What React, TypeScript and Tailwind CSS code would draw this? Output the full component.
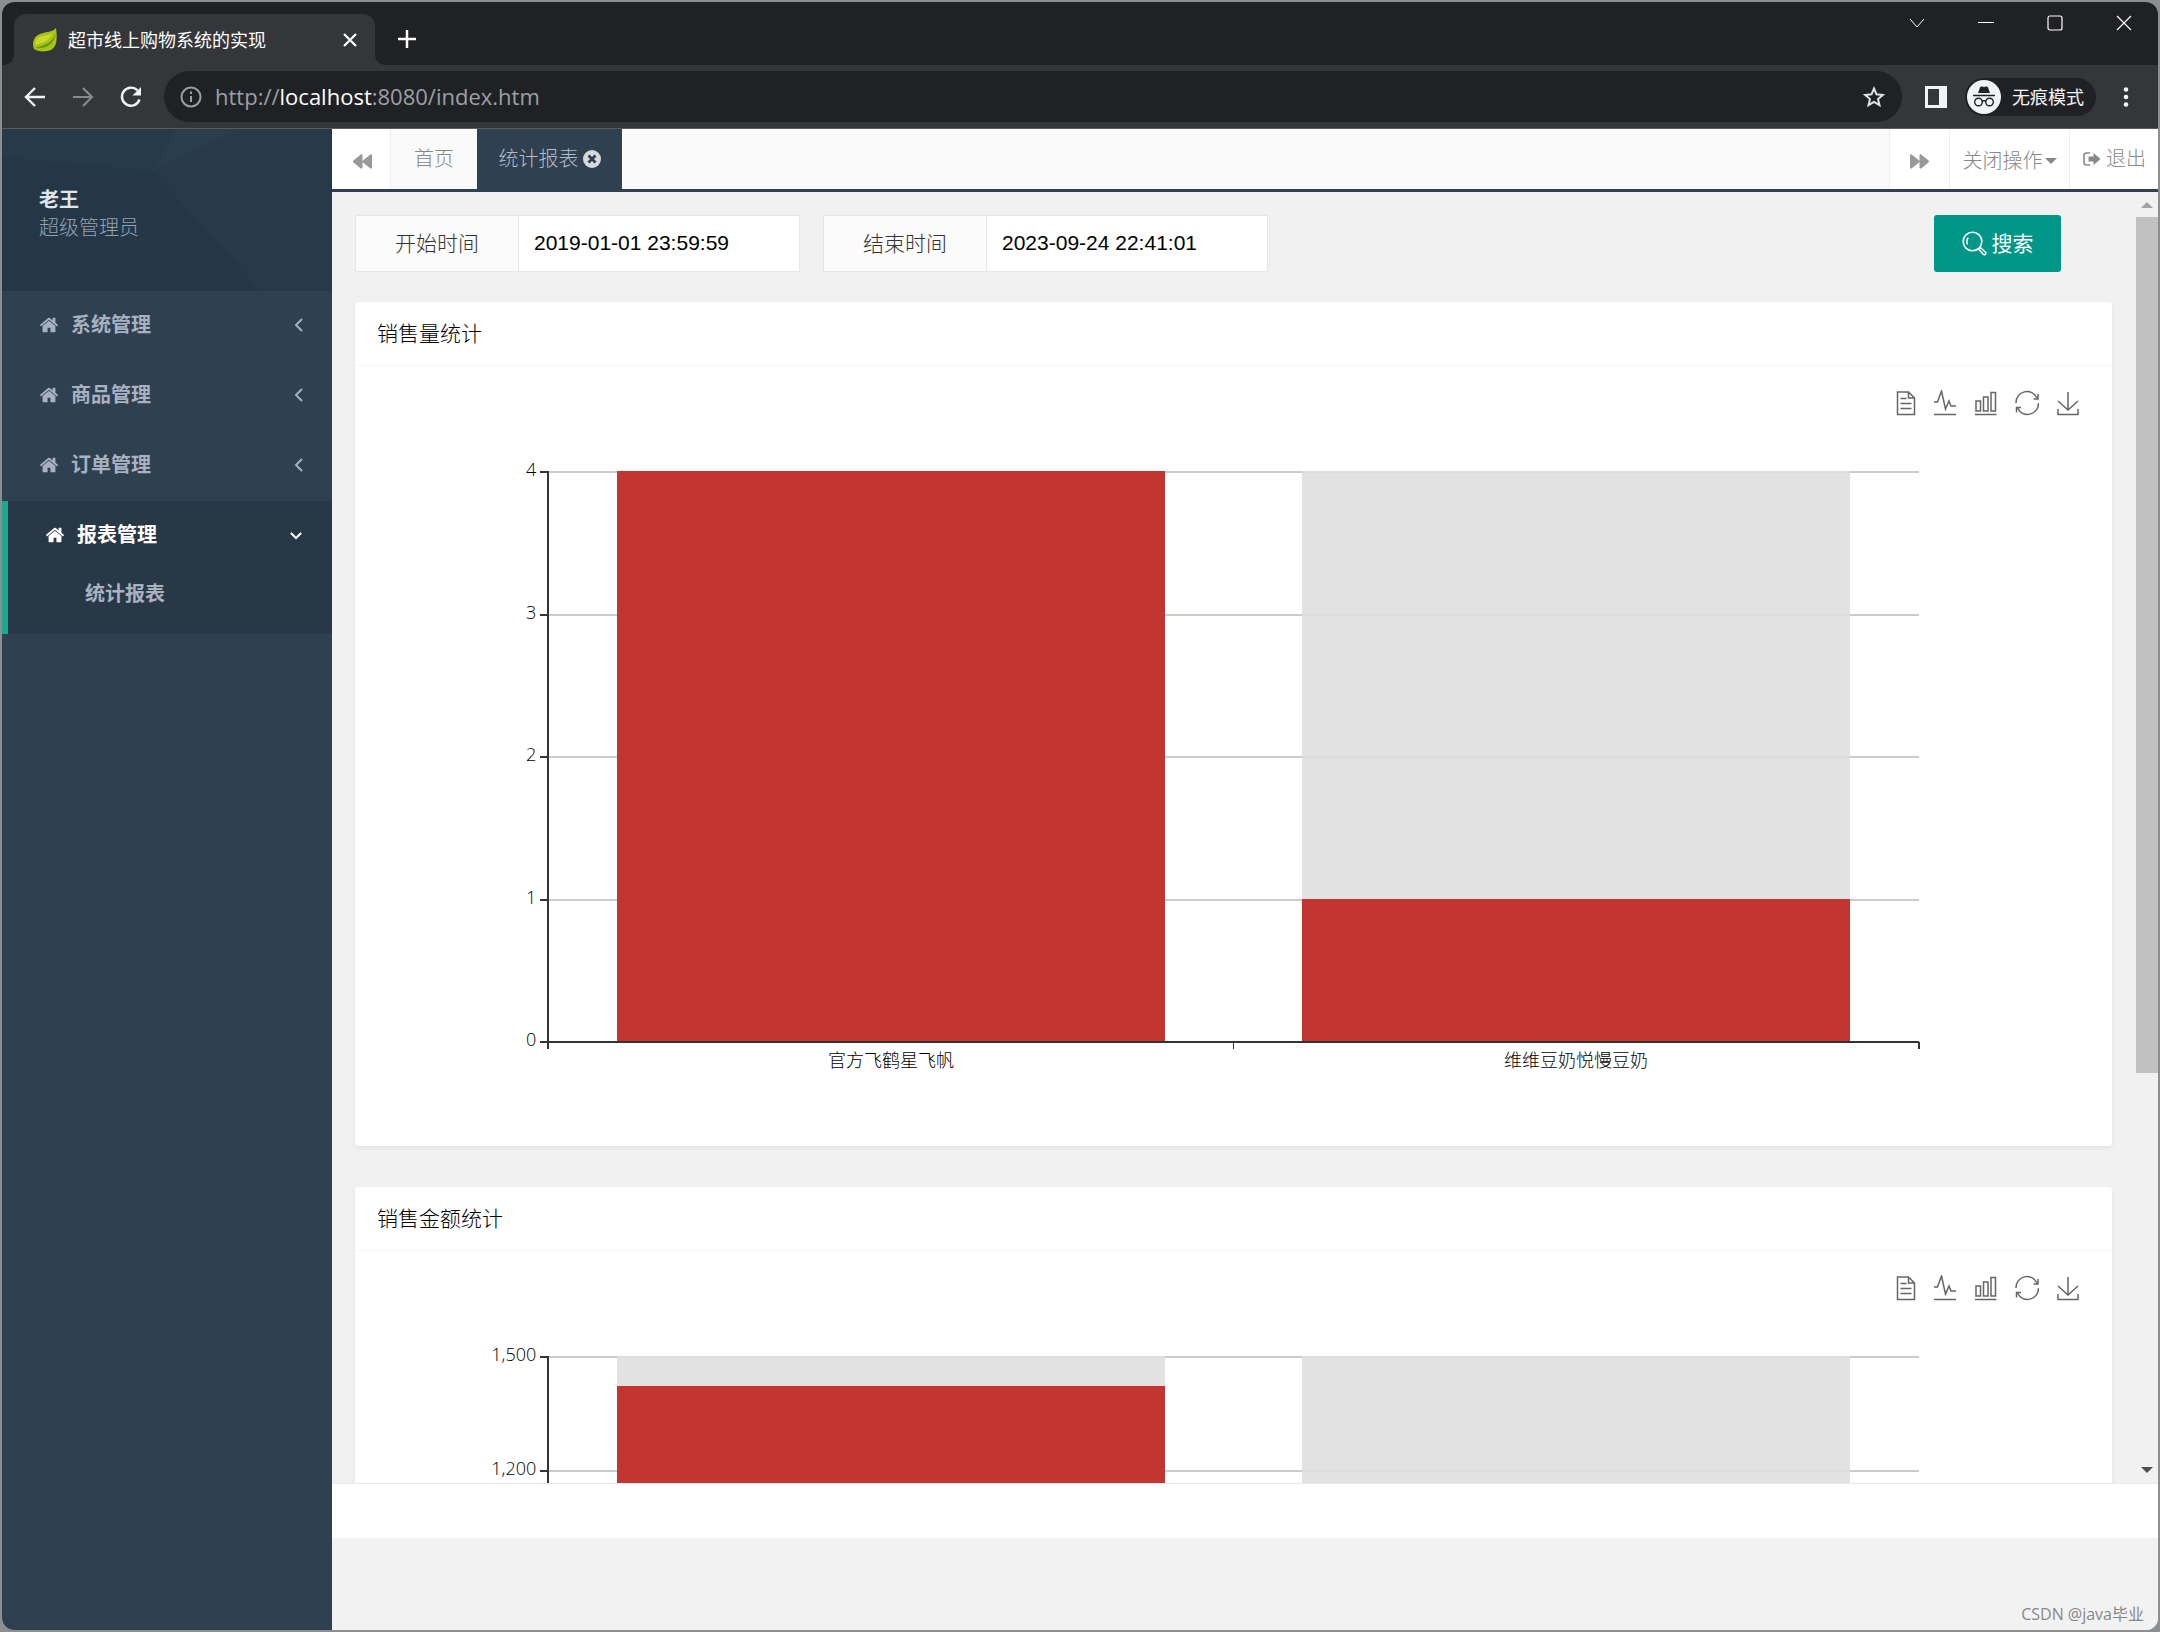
import React from "react";
import { FaBackward, FaForward } from "react-icons/fa";

const uiFont = "font-['Open_Sans','Noto_Sans_CJK_SC',sans-serif]";

function HomeIcon({ className }: { className?: string }) {
  return (
    <svg viewBox="0 0 1664 1792" fill="currentColor" className={className} aria-hidden="true">
      <path d="M1408 992v480q0 26-19 45t-45 19H960v-384H704v384H320q-26 0-45-19t-19-45V992q0-1 .5-3t.5-3l575-474 575 474q1 2 1 6zm223-69l-62 74q-8 9-21 11h-3q-13 0-21-7L832 424 140 1001q-12 8-24 7-13-2-21-11l-62-74q-8-10-7-23.500t11-21.500l719-599q32-26 76-26t76 26l244 204V288q0-14 9-23t23-9h192q14 0 23 9t9 23v408l219 182q10 8 11 21.500t-7 23.500z" />
    </svg>
  );
}

function LeafLogo() {
  return (
    <svg viewBox="0 0 26 26" className="size-[26px] shrink-0" aria-hidden="true">
      <path d="M24 1C20 6 13 4 6 8C1 11 0 17 2 22C6 25 14 25 19 23C26 19 25 9 24 1Z" fill="#a5c416" />
      <path d="M24 6C22 14 14 18 3 21C12 22 22 19 24 6Z" fill="#6d9614" />
      <path d="M21 6C15 9 8 8 5 12C3 15 3 17 4 18C11 16 18 13 21 6Z" fill="#c9d92e" />
    </svg>
  );
}

function BrowserTabs() {
  return (
    <header className="flex h-[63px] shrink-0 items-start bg-[#202124] text-white">
      <svg viewBox="0 0 12 12" className="size-3 shrink-0 self-end" fill="#35363a" aria-hidden="true">
        <path d="M12 0V12H0Q12 12 12 0Z" />
      </svg>
      <div className="mt-3 flex h-[51px] w-[361px] items-center rounded-t-xl bg-[#35363a] pr-[14px] pl-[18px]">
        <LeafLogo />
        <span className="ml-[10px] flex-1 text-[18px] leading-6">超市线上购物系统的实现</span>
        <button aria-label="关闭标签页" className="p-1">
          <svg viewBox="0 0 14 14" className="size-[14px]" stroke="currentColor" strokeWidth="2.200">
            <path d="M1 1L13 13M13 1L1 13" />
          </svg>
        </button>
      </div>
      <svg viewBox="0 0 12 12" className="size-3 shrink-0 self-end" fill="#35363a" aria-hidden="true">
        <path d="M0 0V12H12Q0 12 0 0Z" />
      </svg>
      <button aria-label="新标签页" className="mt-[28px] ml-[11px]">
        <svg viewBox="0 0 18 18" className="size-[18px]" stroke="currentColor" strokeWidth="2.500">
          <path d="M9 0V18M0 9H18" />
        </svg>
      </button>
      <div className="ml-auto flex items-center gap-[53px] pt-[13px] pr-[26px]">
        <button aria-label="搜索标签页">
          <svg viewBox="0 0 16 16" className="size-4" fill="none" stroke="currentColor" strokeWidth="1">
            <path d="M1 4L8 12L15 4" />
          </svg>
        </button>
        <button aria-label="最小化">
          <svg viewBox="0 0 16 16" className="size-4" fill="none" stroke="currentColor" strokeWidth="1">
            <path d="M0 7.500H16" />
          </svg>
        </button>
        <button aria-label="最大化">
          <svg viewBox="0 0 16 16" className="size-4" fill="none" stroke="currentColor" strokeWidth="1.200">
            <rect x="1" y="1" width="14" height="14" rx="2" />
          </svg>
        </button>
        <button aria-label="关闭">
          <svg viewBox="0 0 16 16" className="size-4" fill="none" stroke="currentColor" strokeWidth="1.200">
            <path d="M1 1L15 15M15 1L1 15" />
          </svg>
        </button>
      </div>
    </header>
  );
}

function BrowserToolbar() {
  return (
    <div className="flex h-16 shrink-0 items-center border-b border-[#5a5c60] bg-[#35363a] pr-[29px] pl-[22px] text-[#f1f3f4]">
      <button aria-label="后退">
        <svg viewBox="0 0 22 22" className="size-[22px]" fill="none" stroke="currentColor" strokeWidth="2.400">
          <path d="M21 11H3M11 2L2 11L11 20" />
        </svg>
      </button>
      <button aria-label="前进" className="ml-[26px] text-[#88898c]">
        <svg viewBox="0 0 22 22" className="size-[22px]" fill="none" stroke="currentColor" strokeWidth="2.200">
          <path d="M1 11H19M11 2L20 11L11 20" />
        </svg>
      </button>
      <button aria-label="重新加载" className="ml-[25px]">
        <svg viewBox="0 0 24 24" className="size-6" fill="none" stroke="currentColor" strokeWidth="2.400">
          <path d="M18.500 5.500A9 9 0 1 0 20.500 14.500" />
          <path d="M22 2V10.500H13.500Z" fill="currentColor" stroke="none" />
        </svg>
      </button>
      <div className="ml-[21px] flex h-[51px] flex-1 items-center rounded-full bg-[#202124] pr-4 pl-4">
        <svg viewBox="0 0 22 22" className="size-[22px] text-[#9aa0a6]" fill="none" stroke="currentColor" strokeWidth="2">
          <circle cx="11" cy="11" r="9.500" />
          <path d="M11 10V16M11 5.500V8" />
        </svg>
        <p className="ml-[13px] flex-1 pb-[2px] text-[22px] leading-7 text-[#9aa0a6]">
          http://<span className="text-white">localhost</span>:8080/index.htm
        </p>
        <button aria-label="收藏">
          <svg viewBox="0 0 24 24" className="size-6 text-[#dfe1e5]" fill="none" stroke="currentColor" strokeWidth="2">
            <path d="M12 3.500L14.500 9.300L20.800 9.900L16 14L17.500 20.200L12 16.900L6.500 20.200L8 14L3.200 9.900L9.500 9.300Z" />
          </svg>
        </button>
      </div>
      <button aria-label="侧边栏" className="ml-[23px]">
        <svg viewBox="0 0 22 22" className="size-[22px]">
          <rect width="22" height="22" fill="#f1f3f4" />
          <rect x="3" y="3" width="11" height="16" fill="#35363a" />
        </svg>
      </button>
      <button className="ml-[18px] flex h-[38px] items-center gap-[11px] rounded-full bg-[#202124] pr-3 pl-[2px]">
        <svg viewBox="0 0 34 34" className="size-[34px]" fill="none">
          <circle cx="17" cy="17" r="17" fill="#f1f3f4" />
          <path d="M11 13L13 7.500Q13.500 6 15 6.500L17 7L19 6.500Q20.500 6 21 7.500L23 13Z" fill="#202124" />
          <path d="M6 15.500H28" stroke="#202124" strokeWidth="1.600" />
          <circle cx="11.500" cy="22" r="3.800" stroke="#202124" strokeWidth="1.400" />
          <circle cx="22.500" cy="22" r="3.800" stroke="#202124" strokeWidth="1.400" />
          <path d="M15 21.500Q17 20 19 21.500" stroke="#202124" strokeWidth="1.400" />
        </svg>
        <span className="text-[18px] leading-6">无痕模式</span>
      </button>
      <button aria-label="菜单" className="ml-[27px]">
        <svg viewBox="0 0 6 20" className="h-5 w-[6px]" fill="currentColor">
          <circle cx="3" cy="2.500" r="2.300" />
          <circle cx="3" cy="10" r="2.300" />
          <circle cx="3" cy="17.500" r="2.300" />
        </svg>
      </button>
    </div>
  );
}

function Sidebar() {
  return (
    <aside className="flex w-[330px] shrink-0 flex-col bg-[#2f4050]">
      <div className="relative h-[162px] overflow-hidden bg-[#253746]">
        <svg viewBox="0 0 330 162" preserveAspectRatio="none" className="absolute inset-0 size-full" aria-hidden="true">
          <path d="M0 28L150 42L174 0H0Z" fill="#273a49" />
          <path d="M150 42L174 0H330V162H258L220 118Z" fill="#283a49" />
          <path d="M150 42L186 24L238 0H174Z" fill="#2a3d4c" />
        </svg>
        <div className="relative px-[37px] pt-[57px] text-[20px] leading-7">
          <p className="font-bold text-[#dfe4ed]">老王</p>
          <p className="font-light text-[#8fa3b5]">超级管理员</p>
        </div>
      </div>
      <nav>
        <ul className="text-[20px] leading-[30px] font-bold text-[#a7b1c2]">
          {["系统管理", "商品管理", "订单管理"].map((name) => (
            <li key={name}>
              <a href="#" className="flex h-[70px] items-center pr-7 pb-[2px] pl-[37px]">
                <HomeIcon className="size-5" />
                <span className="ml-3 flex-1">{name}</span>
                <svg viewBox="0 0 10 14" className="h-[14px] w-[10px]" fill="none" stroke="currentColor" strokeWidth="2" aria-hidden="true">
                  <path d="M8 1L2 7L8 13" />
                </svg>
              </a>
            </li>
          ))}
          <li className="h-[133px] border-l-6 border-[#19aa8d] bg-[#293846]">
            <a href="#" className="flex h-[70px] items-center pr-[30px] pb-[2px] pl-[37px] text-white">
              <HomeIcon className="size-5" />
              <span className="ml-3 flex-1">报表管理</span>
              <svg viewBox="0 0 14 10" className="h-[9px] w-3" fill="none" stroke="currentColor" strokeWidth="2.400" aria-hidden="true">
                <path d="M1 2L7 8L13 2" />
              </svg>
            </a>
            <a href="#" className="block pt-2 pl-[77px]">
              统计报表
            </a>
          </li>
        </ul>
      </nav>
    </aside>
  );
}

function PageTabs() {
  return (
    <div className="flex h-[63px] shrink-0 items-stretch border-b-3 border-[#2f4050] bg-[#fafafa] text-[20px] leading-7 font-light text-[#888888]">
      <button aria-label="向左滚动" className="flex w-[59px] items-center justify-center border-r border-[#eeeeee] bg-white pt-1 pl-[2px] text-[#999999]">
        <FaBackward className="size-[19px]" />
      </button>
      <a href="#" className="flex w-[86px] items-center justify-center">
        首页
      </a>
      <a href="#" className="flex w-[145px] items-center justify-center gap-1 bg-[#2f4050] text-[#b4bdcb]">
        统计报表
        <svg viewBox="0 0 18 18" className="size-[18px]" aria-hidden="true">
          <circle cx="9" cy="9" r="9" fill="#d6d9dc" />
          <path d="M5.500 5.500L12.500 12.500M12.500 5.500L5.500 12.500" stroke="#2f4050" strokeWidth="2.800" />
        </svg>
      </a>
      <button aria-label="向右滚动" className="ml-auto flex w-[60px] items-center justify-center border-l border-[#eeeeee] bg-white pt-1 text-[#999999]">
        <FaForward className="size-[19px]" />
      </button>
      <button className="flex w-[120px] items-center justify-center border-l border-[#eeeeee] bg-white pt-1">
        关闭操作
        <svg viewBox="0 0 16 8" className="ml-[2px] h-[6px] w-3" fill="currentColor" aria-hidden="true">
          <path d="M0 0H16L8 8Z" />
        </svg>
      </button>
      <a href="#" className="flex w-[89px] items-center gap-[5px] border-l border-[#eeeeee] bg-white pl-[13px]">
        <svg viewBox="0 0 18 16" className="h-4 w-[18px] shrink-0" aria-hidden="true">
          <path d="M7 2H3.500Q1 2 1 4.500V11.500Q1 14 3.500 14H7" fill="none" stroke="currentColor" strokeWidth="1.600" />
          <path d="M5.500 5.500H10.500V2L17.500 8L10.500 14V10.500H5.500Z" fill="currentColor" />
        </svg>
        退出
      </a>
    </div>
  );
}

function DateField({ id, label, value }: { id: string; label: string; value: string }) {
  return (
    <div className="flex h-[57px] w-[445px] border border-[#e6e6e6] bg-white text-[21px]">
      <label htmlFor={id} className="flex w-[163px] items-center justify-center border-r border-[#e6e6e6] bg-[#fbfbfb] font-light text-[#333333]">
        {label}
      </label>
      <input
        id={id}
        type="text"
        defaultValue={value}
        className="min-w-0 flex-1 bg-white pb-[2px] pl-[15px] font-['Liberation_Sans',sans-serif] text-black outline-none"
      />
    </div>
  );
}

function SearchBar() {
  return (
    <form className="flex items-start gap-[23px]" onSubmit={(event) => event.preventDefault()}>
      <DateField id="start" label="开始时间" value="2019-01-01 23:59:59" />
      <DateField id="end" label="结束时间" value="2023-09-24 22:41:01" />
      <button type="submit" className="mr-[51px] ml-auto flex h-[57px] w-[127px] items-center justify-center gap-[5px] rounded-[3px] bg-[#009688] text-[21px] text-white">
        <svg viewBox="0 0 25 25" className="size-[25px]" fill="none" stroke="currentColor" aria-hidden="true">
          <circle cx="10.500" cy="10.500" r="9.300" strokeWidth="1.600" />
          <path d="M5.500 13.500Q3.800 9.500 6.300 6.800" strokeWidth="1.500" />
          <path d="M17 18.500L18.700 16.800L23.500 21.200Q24.300 22.300 23.300 23.400Q22.200 24.200 21.200 23.300Z" strokeWidth="1.500" />
        </svg>
        搜索
      </button>
    </form>
  );
}

const toolIcons: { name: string; paths: React.ReactNode }[] = [
  {
    name: "数据视图",
    paths: <path d="M5.500 2H16.500L22.500 8V24.500H5.500ZM16.500 2V8H22.500M8.500 8.500H14.500M8.500 13.500H19.500M8.500 18.500H19.500" />,
  },
  {
    name: "切换为折线图",
    paths: <path d="M1 12H4.500L8.500 1L12.500 19L16 11L18 16H23M1 24.500H23" />,
  },
  {
    name: "切换为柱状图",
    paths: <path d="M2 11H6.500V21H2ZM9.500 7H14V21H9.500ZM17 2.500H21.500V21H17ZM1 24.500H22.500" />,
  },
  {
    name: "还原",
    paths: <path d="M1 13A11 11 0 0 1 22 8M23.500 13A11 11 0 0 1 2.500 18M23 4V9H18.500M1.500 22.500V17.500H6" />,
  },
  {
    name: "保存为图片",
    paths: <path d="M12 2V20M2 11L12 20L22 11M2 19V24.500H22V19" />,
  },
];

interface Bar {
  label: string;
  value: number;
}

const plotTop = 89;
const plotHeight = 570;

function BarChart({ bars, max, step }: { bars: Bar[]; max: number; step: number }) {
  const baseline = plotTop + plotHeight;
  const yOf = (value: number) => Math.round(baseline - (value / max) * plotHeight);
  const ticks = Array.from({ length: max / step + 1 }, (_, i) => i * step);
  return (
    <svg className="block h-[763px] w-full overflow-visible font-light" fontSize="18" fill="#000000">
      <g stroke="#cccccc" strokeWidth="2" shapeRendering="crispEdges">
        {ticks.slice(1).map((tick) => (
          <line key={tick} x1="10%" x2="90%" y1={yOf(tick)} y2={yOf(tick)} />
        ))}
      </g>
      <g shapeRendering="crispEdges">
        {bars.map((bar, i) => (
          <React.Fragment key={bar.label}>
            <rect x={`${14 + i * 40}%`} y={plotTop - 1} width="32%" height={plotHeight} fill="#dfdfdf" fillOpacity="0.9" />
            <rect x={`${14 + i * 40}%`} y={yOf(bar.value) - 1} width="32%" height={baseline - yOf(bar.value)} fill="#c23531" />
          </React.Fragment>
        ))}
      </g>
      <g stroke="#333333" strokeWidth="2" shapeRendering="crispEdges">
        <line x1="10%" x2="10%" y1={plotTop - 1} y2={baseline + 7} />
        <line x1="50%" x2="50%" y1={baseline} y2={baseline + 7} strokeWidth="1" />
        <line x1="90%" x2="90%" y1={baseline} y2={baseline + 7} />
        <line x1="10%" x2="90%" y1={baseline} y2={baseline} />
      </g>
      <svg x="10%" className="overflow-visible">
        {ticks.map((tick) => (
          <g key={tick}>
            <line x1="-8" x2="0" y1={yOf(tick)} y2={yOf(tick)} stroke="#333333" strokeWidth="2" shapeRendering="crispEdges" />
            <text x="-12" y={yOf(tick) + 4} textAnchor="end">
              {tick.toLocaleString("en-US")}
            </text>
          </g>
        ))}
      </svg>
      {bars.map((bar, i) => (
        <text key={bar.label} x={`${30 + i * 40}%`} y={baseline + 25} textAnchor="middle">
          {bar.label}
        </text>
      ))}
    </svg>
  );
}

function ChartCard({ title, bars, max, step }: { title: string; bars: Bar[]; max: number; step: number }) {
  return (
    <section className="shrink-0 rounded-[3px] bg-white shadow-[0_2px_4px_rgba(0,0,0,0.07)]">
      <h2 className="flex h-16 items-center border-b border-[#f6f6f6] px-[22px] text-[21px] font-light text-black">{title}</h2>
      <div className="relative px-[22px] pt-[17px]">
        <BarChart bars={bars} max={max} step={step} />
        <div className="absolute top-6 right-8 flex gap-[17px]">
          {toolIcons.map((icon) => (
            <button key={icon.name} aria-label={icon.name}>
              <svg viewBox="0 0 24 26" className="h-[26px] w-6" fill="none" stroke="#666666" strokeWidth="1.500">
                {icon.paths}
              </svg>
            </button>
          ))}
        </div>
      </div>
    </section>
  );
}

function Scrollbar() {
  return (
    <div className="flex w-[22px] shrink-0 flex-col items-center bg-[#f1f1f1]">
      <svg viewBox="0 0 12 6" className="mt-[10px] mb-[9px] h-[6px] w-3 shrink-0" fill="#a3a3a3">
        <path d="M0 6L6 0L12 6Z" />
      </svg>
      <div className="flex w-full flex-1 flex-col">
        <div className="h-[69%] w-full bg-[#c1c1c1]" />
      </div>
      <svg viewBox="0 0 12 6" className="my-[10px] h-[6px] w-3 shrink-0" fill="#505050">
        <path d="M0 0L6 6L12 0Z" />
      </svg>
    </div>
  );
}

export default function App() {
  return (
    <div className={`h-screen bg-[#8b8f92] p-[2px] ${uiFont}`}>
      <div className="flex h-full flex-col overflow-hidden rounded-xl bg-[#f2f2f2]">
        <BrowserTabs />
        <BrowserToolbar />
        <div className="flex min-h-0 flex-1">
          <Sidebar />
          <div className="flex min-w-0 flex-1 flex-col">
            <PageTabs />
            <div className="flex min-h-0 flex-1 border-b border-[#e7eaec]">
              <main className="flex min-w-0 flex-1 flex-col gap-[41px] overflow-y-auto bg-[#f1f1f1] pt-[23px] pr-6 pl-[23px] [scrollbar-width:none]">
                <div className="flex shrink-0 flex-col gap-[30px]">
                  <SearchBar />
                  <ChartCard
                    title="销售量统计"
                    max={4}
                    step={1}
                    bars={[
                      { label: "官方飞鹤星飞帆", value: 4 },
                      { label: "维维豆奶悦慢豆奶", value: 1 },
                    ]}
                  />
                </div>
                <ChartCard
                  title="销售金额统计"
                  max={1500}
                  step={300}
                  bars={[
                    { label: "官方飞鹤星飞帆", value: 1420 },
                    { label: "维维豆奶悦慢豆奶", value: 60 },
                  ]}
                />
              </main>
              <Scrollbar />
            </div>
            <div className="h-[54px] shrink-0 bg-white" />
            <footer className="flex h-[92px] shrink-0 items-end justify-end bg-[#f2f2f2] pr-[14px] pb-1 text-[16px] leading-6 text-[#888888]">
              CSDN @java毕业
            </footer>
          </div>
        </div>
      </div>
    </div>
  );
}
